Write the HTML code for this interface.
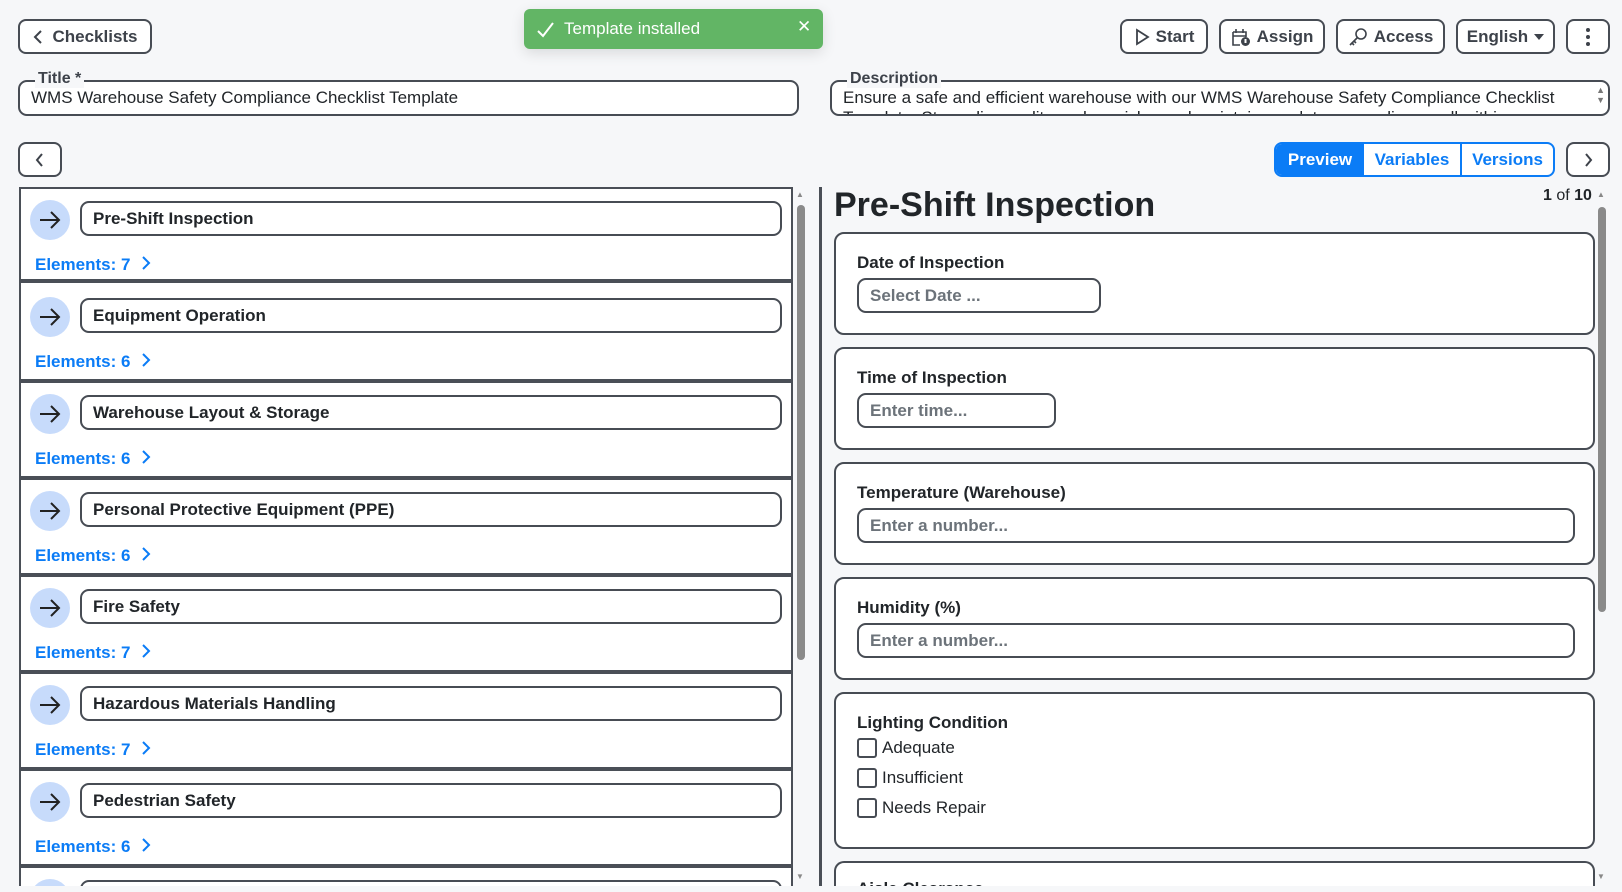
<!DOCTYPE html>
<html style="width:1622px;height:892px;overflow:hidden"><head><meta charset="utf-8">
<style>
*{box-sizing:border-box;margin:0;padding:0}
body{width:1622px;height:892px;background:#f6f7f9;font-family:"Liberation Sans",sans-serif;color:#212529;position:relative;overflow:hidden;font-size:17px}
.a{position:absolute}
.btn{position:absolute;border:2px solid #474c54;border-radius:8px;background:#fff;height:35px;display:flex;align-items:center;justify-content:center;font-weight:bold;color:#3d424a;font-size:17px;gap:6px}
.fld{position:absolute;border:2px solid #474c54;border-radius:9px;background:#fff}
.lg{position:absolute;background:#f6f7f9;padding:0 3px;font-size:16px;color:#3d424a;font-weight:bold;line-height:18px}
.sec{position:absolute;left:21px;width:770px;height:97px;background:#fff;border-bottom:4px solid #4a4f57}
.circ{position:absolute;left:9px;top:11px;width:40px;height:40px;border-radius:50%;background:#c7dbfb;display:flex;align-items:center;justify-content:center}
.ti{position:absolute;left:59px;top:12px;width:702px;height:35px;border:2px solid #474c54;border-radius:9px;padding-left:11px;font-weight:bold;line-height:31px;color:#212529}
.el{position:absolute;left:14px;top:66px;color:#0b7cf6;font-weight:bold;line-height:20px}
.card{position:absolute;left:12px;width:761px;background:#fff;border:2px solid #474c54;border-radius:10px}
.lab{position:absolute;left:21px;top:19px;font-weight:bold;color:#212529}
.inp{position:absolute;left:21px;top:44px;height:35px;border:2px solid #474c54;border-radius:9px;padding-left:11px;line-height:31px;color:#6c737a;font-weight:bold}
.cb{position:absolute;left:21px;display:flex;align-items:center;gap:5px;color:#212529}
.cb i{display:block;width:20px;height:20px;border:2px solid #474c54;border-radius:3px}
</style></head><body>

<div class="btn" style="left:18px;top:19px;width:134px"><svg width="14" height="16" viewBox="0 0 14 16"><path d="M9 2 L3 8 L9 14" fill="none" stroke="#3d424a" stroke-width="2"/></svg>Checklists</div>

<div class="a" style="left:524px;top:9px;width:299px;height:40px;background:#62b565;border-radius:6px;box-shadow:0 4px 14px rgba(0,0,0,.12);color:#fff">
<svg class="a" style="left:12px;top:12px" width="20" height="18" viewBox="0 0 20 18"><path d="M2 10 L7 15 L17 2" fill="none" stroke="#fff" stroke-width="2"/></svg>
<span class="a" style="left:40px;top:10px;font-size:17px">Template installed</span>
<span class="a" style="left:273px;top:8px;font-size:17px">✕</span></div>

<div class="btn" style="left:1120px;top:19px;width:88px"><svg width="16" height="18" viewBox="0 0 16 18"><path d="M3 2 L14 9 L3 16 Z" fill="none" stroke="#3d424a" stroke-width="1.8"/></svg>Start</div>
<div class="btn" style="left:1219px;top:19px;width:106px"><svg width="20" height="20" viewBox="0 0 20 20"><path d="M2 5 H15 V10 M2 5 V18 H9 M2 9 H15 M5 2 V6 M12 2 V6" fill="none" stroke="#3d424a" stroke-width="1.6"/><circle cx="14.5" cy="14.5" r="4.5" fill="#3d424a"/><rect x="13.5" y="12" width="2" height="4" fill="#fff"/></svg>Assign</div>
<div class="btn" style="left:1336px;top:19px;width:109px"><svg width="20" height="20" viewBox="0 0 20 20"><circle cx="13" cy="7" r="5" fill="none" stroke="#3d424a" stroke-width="1.6"/><path d="M9 11 L2 18 M4 16 L6 18 M6 14 L8 16" fill="none" stroke="#3d424a" stroke-width="1.6"/></svg>Access</div>
<div class="btn" style="left:1456px;top:19px;width:99px">English<svg width="10" height="6" viewBox="0 0 10 6"><path d="M0 0 H10 L5 6Z" fill="#3d424a"/></svg></div>
<div class="btn" style="left:1566px;top:19px;width:44px"><svg width="4" height="18" viewBox="0 0 4 18"><circle cx="2" cy="2" r="2" fill="#3d424a"/><circle cx="2" cy="9" r="2" fill="#3d424a"/><circle cx="2" cy="16" r="2" fill="#3d424a"/></svg></div>

<div class="fld" style="left:18px;top:80px;width:781px;height:36px"><span class="a" style="left:11px;top:6px;color:#212529">WMS Warehouse Safety Compliance Checklist Template</span></div>
<span class="lg" style="left:35px;top:70px">Title *</span>
<div class="fld" style="left:830px;top:80px;width:780px;height:36px;overflow:hidden"><span class="a" style="left:11px;top:6px;color:#212529;white-space:nowrap">Ensure a safe and efficient warehouse with our WMS Warehouse Safety Compliance Checklist</span><span class="a" style="left:11px;top:26px;color:#212529;white-space:nowrap">Template. Streamline audits, reduce risks, and maintain regulatory compliance, all within</span><span class="a" style="right:3px;top:3px;font-size:9px;color:#777;line-height:10px">▲<br>▼</span></div>
<span class="lg" style="left:847px;top:70px">Description</span>

<div class="btn" style="left:18px;top:142px;width:44px"><svg width="12" height="16" viewBox="0 0 12 16"><path d="M8 2 L3 8 L8 14" fill="none" stroke="#3d424a" stroke-width="2"/></svg></div>
<div class="a" style="left:1274px;top:142px;width:281px;height:35px;border:2px solid #0b7cf6;border-radius:8px;background:#fff;display:flex;font-weight:bold;color:#0b7cf6;overflow:hidden">
<div style="width:88px;background:#0b7cf6;color:#fff;display:flex;align-items:center;justify-content:center">Preview</div>
<div style="width:98px;display:flex;align-items:center;justify-content:center;border-right:2px solid #0b7cf6">Variables</div>
<div style="flex:1;display:flex;align-items:center;justify-content:center">Versions</div></div>
<div class="btn" style="left:1566px;top:142px;width:44px"><svg width="12" height="16" viewBox="0 0 12 16"><path d="M4 2 L9 8 L4 14" fill="none" stroke="#3d424a" stroke-width="2"/></svg></div>

<!-- left panel -->
<div class="a" style="left:19px;top:187px;width:774px;height:699px;border:2px solid #4a4f57;border-bottom:none;background:#fff"></div>
<div class="a" style="left:797px;top:205px;width:8px;height:455px;border-radius:4px;background:#8a8a8a"></div>
<div class="a" style="left:796px;top:190px;font-size:8px;color:#888">▲</div>
<div class="a" style="left:796px;top:872px;font-size:8px;color:#888">▼</div>

<div class="a" style="left:0;top:0;width:800px;height:886px;overflow:hidden">
<div class="sec" style="top:189px;height:94px"><div class="circ"><svg width="22" height="18" viewBox="0 0 22 18"><path d="M1 9 H20 M12 1 L20 9 L12 17" fill="none" stroke="#222" stroke-width="2"/></svg></div><div class="ti">Pre-Shift Inspection</div><div class="el">Elements: 7 <svg width="10" height="14" viewBox="0 0 10 14" style="margin-left:6px"><path d="M2 1 L8 7 L2 13" fill="none" stroke="#0b7cf6" stroke-width="2"/></svg></div></div>
<div class="sec" style="top:286px"><div class="circ"><svg width="22" height="18" viewBox="0 0 22 18"><path d="M1 9 H20 M12 1 L20 9 L12 17" fill="none" stroke="#222" stroke-width="2"/></svg></div><div class="ti">Equipment Operation</div><div class="el">Elements: 6 <svg width="10" height="14" viewBox="0 0 10 14" style="margin-left:6px"><path d="M2 1 L8 7 L2 13" fill="none" stroke="#0b7cf6" stroke-width="2"/></svg></div></div>
<div class="sec" style="top:383px"><div class="circ"><svg width="22" height="18" viewBox="0 0 22 18"><path d="M1 9 H20 M12 1 L20 9 L12 17" fill="none" stroke="#222" stroke-width="2"/></svg></div><div class="ti">Warehouse Layout &amp; Storage</div><div class="el">Elements: 6 <svg width="10" height="14" viewBox="0 0 10 14" style="margin-left:6px"><path d="M2 1 L8 7 L2 13" fill="none" stroke="#0b7cf6" stroke-width="2"/></svg></div></div>
<div class="sec" style="top:480px"><div class="circ"><svg width="22" height="18" viewBox="0 0 22 18"><path d="M1 9 H20 M12 1 L20 9 L12 17" fill="none" stroke="#222" stroke-width="2"/></svg></div><div class="ti">Personal Protective Equipment (PPE)</div><div class="el">Elements: 6 <svg width="10" height="14" viewBox="0 0 10 14" style="margin-left:6px"><path d="M2 1 L8 7 L2 13" fill="none" stroke="#0b7cf6" stroke-width="2"/></svg></div></div>
<div class="sec" style="top:577px"><div class="circ"><svg width="22" height="18" viewBox="0 0 22 18"><path d="M1 9 H20 M12 1 L20 9 L12 17" fill="none" stroke="#222" stroke-width="2"/></svg></div><div class="ti">Fire Safety</div><div class="el">Elements: 7 <svg width="10" height="14" viewBox="0 0 10 14" style="margin-left:6px"><path d="M2 1 L8 7 L2 13" fill="none" stroke="#0b7cf6" stroke-width="2"/></svg></div></div>
<div class="sec" style="top:674px"><div class="circ"><svg width="22" height="18" viewBox="0 0 22 18"><path d="M1 9 H20 M12 1 L20 9 L12 17" fill="none" stroke="#222" stroke-width="2"/></svg></div><div class="ti">Hazardous Materials Handling</div><div class="el">Elements: 7 <svg width="10" height="14" viewBox="0 0 10 14" style="margin-left:6px"><path d="M2 1 L8 7 L2 13" fill="none" stroke="#0b7cf6" stroke-width="2"/></svg></div></div>
<div class="sec" style="top:771px"><div class="circ"><svg width="22" height="18" viewBox="0 0 22 18"><path d="M1 9 H20 M12 1 L20 9 L12 17" fill="none" stroke="#222" stroke-width="2"/></svg></div><div class="ti">Pedestrian Safety</div><div class="el">Elements: 6 <svg width="10" height="14" viewBox="0 0 10 14" style="margin-left:6px"><path d="M2 1 L8 7 L2 13" fill="none" stroke="#0b7cf6" stroke-width="2"/></svg></div></div>
<div class="sec" style="top:868px;height:18px;border:none;overflow:hidden"><div class="circ"></div><div class="ti"></div></div>
</div>

<!-- right panel -->
<div class="a" style="left:819px;top:187px;width:3px;height:699px;background:#4a4f57"></div>
<div class="a" style="left:834px;top:186px;font-size:34px;font-weight:bold;color:#212529">Pre-Shift Inspection</div>
<div class="a" style="left:1543px;top:187px;font-size:16px;color:#212529"><b>1</b> of <b>10</b></div>
<div class="a" style="left:1597px;top:190px;font-size:8px;color:#888">▲</div>
<div class="a" style="left:1597px;top:872px;font-size:8px;color:#888">▼</div>
<div class="a" style="left:1598px;top:207px;width:8px;height:405px;border-radius:4px;background:#8a8a8a"></div>

<div class="a" style="left:822px;top:0;width:775px;height:886px;overflow:hidden">
<div class="card" style="top:232px;height:103px"><div class="lab">Date of Inspection</div><div class="inp" style="width:244px">Select Date ...</div></div>
<div class="card" style="top:347px;height:103px"><div class="lab">Time of Inspection</div><div class="inp" style="width:199px">Enter time...</div></div>
<div class="card" style="top:462px;height:103px"><div class="lab">Temperature (Warehouse)</div><div class="inp" style="width:718px">Enter a number...</div></div>
<div class="card" style="top:577px;height:103px"><div class="lab">Humidity (%)</div><div class="inp" style="width:718px">Enter a number...</div></div>
<div class="card" style="top:692px;height:157px"><div class="lab">Lighting Condition</div>
<div class="cb" style="top:44px"><i></i>Adequate</div>
<div class="cb" style="top:74px"><i></i>Insufficient</div>
<div class="cb" style="top:104px"><i></i>Needs Repair</div></div>
<div class="card" style="top:861px;height:25px;border-bottom:none;border-radius:10px 10px 0 0;overflow:hidden"><div class="lab" style="top:16px">Aisle Clearance</div></div>
</div>
</body></html>
